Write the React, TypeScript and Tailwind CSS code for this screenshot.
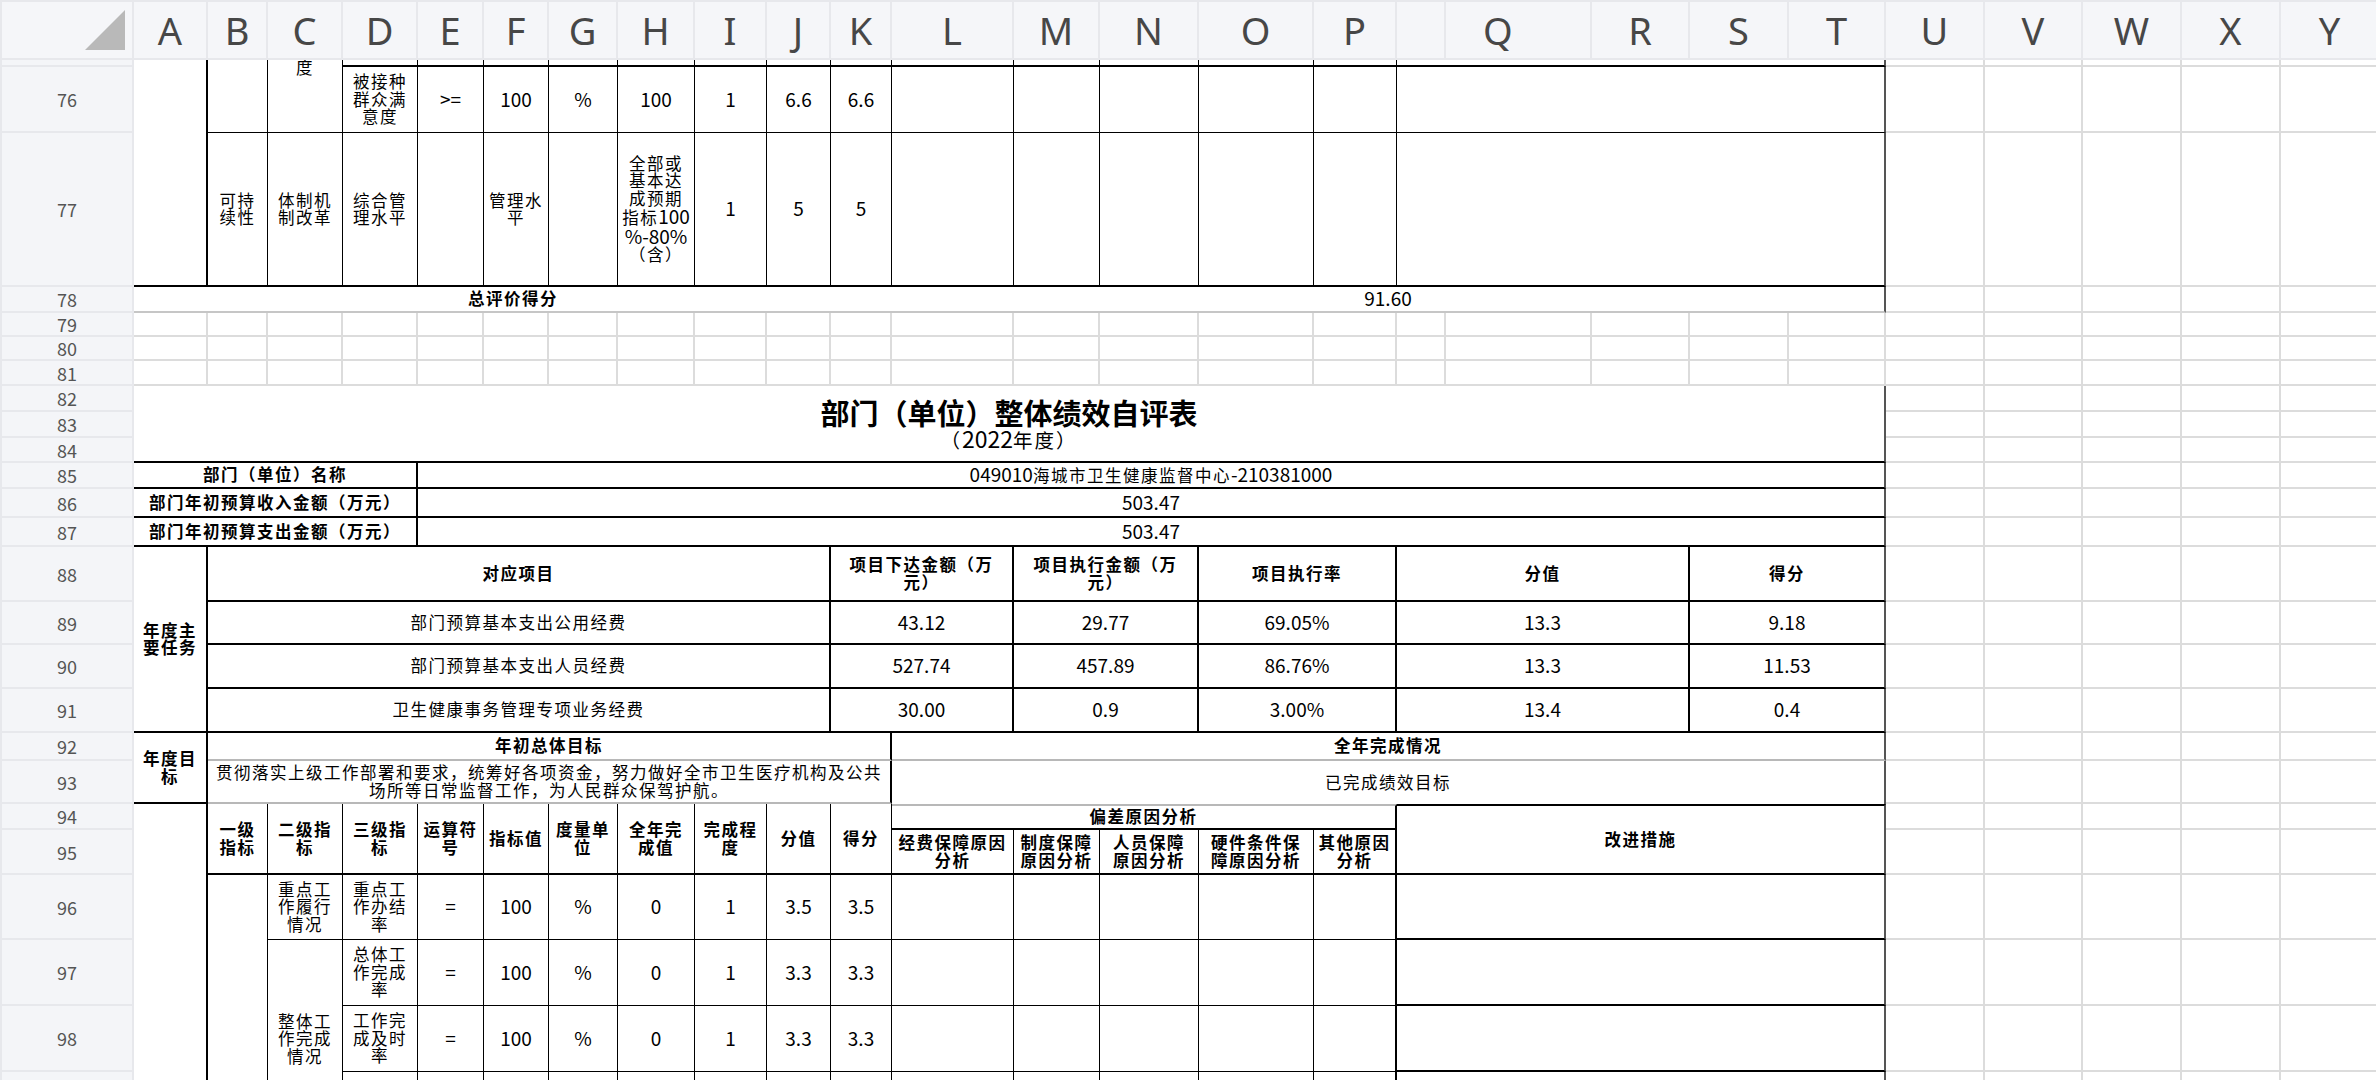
import React from "react";

type Spec = {
  c: number;
  r: number;
  cs?: number;
  rs?: number;
  t?: string;
  b?: boolean;
  x?: string;
  node?: React.ReactNode;
};

const COLS =
  "grid-cols-[134px_74px_60px_75px_75px_66px_65px_69px_77px_72px_64px_61px_122px_86px_99px_115px_83px_49px_146px_98px_99px_97px_99px_98px_99px_99px_99px]";

const CS = [
  "",
  "col-start-1",
  "col-start-2",
  "col-start-3",
  "col-start-4",
  "col-start-5",
  "col-start-6",
  "col-start-7",
  "col-start-8",
  "col-start-9",
  "col-start-10",
  "col-start-11",
  "col-start-12",
  "col-start-13",
  "col-start-14",
  "col-start-15",
  "col-start-16",
  "col-start-17",
  "col-start-18",
  "col-start-19",
  "col-start-20",
  "col-start-21",
  "col-start-22",
];

const RS = [
  "",
  "row-start-1",
  "row-start-2",
  "row-start-3",
  "row-start-4",
  "row-start-5",
  "row-start-6",
  "row-start-7",
  "row-start-8",
  "row-start-9",
  "row-start-10",
  "row-start-11",
  "row-start-12",
  "row-start-13",
  "row-start-14",
  "row-start-15",
  "row-start-16",
  "row-start-17",
  "row-start-18",
  "row-start-19",
  "row-start-20",
  "row-start-21",
  "row-start-22",
  "row-start-23",
  "row-start-24",
  "row-start-25",
];

const CSP: Record<number, string> = {
  2: "col-span-2",
  3: "col-span-3",
  4: "col-span-4",
  5: "col-span-5",
  9: "col-span-9",
  10: "col-span-10",
  11: "col-span-11",
  17: "col-span-17",
  21: "col-span-21",
};

const RSP: Record<number, string> = {
  2: "row-span-2",
  3: "row-span-3",
  4: "row-span-4",
  6: "row-span-6",
};

const R1 = " border-r border-r-black";
const R2 = " border-r-2 border-r-black";
const RT = " border-r-2 border-r-[#555555]";
const B1 = " border-b border-b-black";
const B2 = " border-b-2 border-b-black";
const BG = " border-b-2 border-b-[#b8b8b8]";
const BL = " border-b-2 border-b-[#c6c6c6]";

const specs: Spec[] = [];
const add = (s: Spec) => {
  specs.push(s);
};
const addRow = (r: number, c0: number, texts: string[], x: string | ((i: number) => string), b = false) => {
  texts.forEach((t, i) => add({ c: c0 + i, r, t, b, x: typeof x === "function" ? x(i) : x }));
};

// Split text into CJK runs and Latin runs: Latin glyphs are drawn larger, as in the sheet's font.
function Runs({ t, latin = "text-[19px] tracking-normal" }: { t: string; latin?: string }) {
  const parts = t.split(/([\x20-\x7e]+)/);
  return (
    <div>
      {parts.map((p, i) =>
        p === "" ? null : /^[\x20-\x7e]/.test(p) ? (
          <span key={i} className={latin}>
            {p}
          </span>
        ) : (
          <span key={i}>{p}</span>
        )
      )}
    </div>
  );
}

// rows 75-77 (tail of previous table)
add({ c: 2, r: 1, rs: 3, x: R2 + B2 });
add({ c: 3, r: 1, rs: 2, x: R1 + B1 });
add({
  c: 4,
  r: 1,
  rs: 2,
  x: R1 + B1 + " items-start",
  node: <span className="-mt-[1px]">度</span>,
});
addRow(1, 5, ["", "", "", "", "", "", "", ""], R1 + B2);
addRow(1, 13, ["", "", "", "", ""], R1 + B2);
add({ c: 18, r: 1, cs: 5, x: RT + B2 });

addRow(2, 5, ["被接种\n群众满\n意度", ">=", "100", "%", "100", "1", "6.6", "6.6"], R1 + B1);
addRow(2, 13, ["", "", "", "", ""], R1 + B1);
add({ c: 18, r: 2, cs: 5, x: RT + B1 });

addRow(
  3,
  3,
  [
    "可持\n续性",
    "体制机\n制改革",
    "综合管\n理水平",
    "",
    "管理水\n平",
    "",
    "全部或\n基本达\n成预期\n指标100\n%-80%\n（含）",
    "1",
    "5",
    "5",
  ],
  R1 + B2
);
addRow(3, 13, ["", "", "", "", ""], R1 + B2);
add({ c: 18, r: 3, cs: 5, x: RT + B2 });

// row 78
add({ c: 2, r: 4, cs: 11, t: "总评价得分", b: true, x: BL });
add({ c: 13, r: 4, cs: 10, t: "91.60", x: RT + BL });

// rows 82-84 title
add({
  c: 2,
  r: 8,
  cs: 21,
  rs: 3,
  x: RT + B2,
  node: (
    <div className="flex flex-col items-center tracking-normal">
      <div className="text-[29px] leading-[30px] font-bold">部门（单位）整体绩效自评表</div>
      <div className="text-[19.5px] leading-[22px] tracking-[2px]">
        <Runs t="（2022年度）" latin="text-[23px] tracking-normal" />
      </div>
    </div>
  ),
});

// rows 85-87
add({ c: 2, r: 11, cs: 4, t: "部门（单位）名称", b: true, x: R2 + B2 });
add({ c: 6, r: 11, cs: 17, t: "049010海城市卫生健康监督中心-210381000", x: RT + B2 });
add({ c: 2, r: 12, cs: 4, t: "部门年初预算收入金额（万元）", b: true, x: R2 + B2 });
add({ c: 6, r: 12, cs: 17, t: "503.47", x: RT + B2 });
add({ c: 2, r: 13, cs: 4, t: "部门年初预算支出金额（万元）", b: true, x: R2 + B2 });
add({ c: 6, r: 13, cs: 17, t: "503.47", x: RT + B2 });

// rows 88-91
add({ c: 2, r: 14, rs: 4, t: "年度主\n要任务", b: true, x: R2 + B2 });
const taskRows: [number, string[], boolean][] = [
  [14, ["对应项目", "项目下达金额（万\n元）", "项目执行金额（万\n元）", "项目执行率", "分值", "得分"], true],
  [15, ["部门预算基本支出公用经费", "43.12", "29.77", "69.05%", "13.3", "9.18"], false],
  [16, ["部门预算基本支出人员经费", "527.74", "457.89", "86.76%", "13.3", "11.53"], false],
  [17, ["卫生健康事务管理专项业务经费", "30.00", "0.9", "3.00%", "13.4", "0.4"], false],
];
taskRows.forEach(([r, t, b]) => {
  add({ c: 3, r, cs: 9, t: t[0], b, x: R2 + B2 });
  add({ c: 12, r, cs: 2, t: t[1], b, x: R2 + B2 });
  add({ c: 14, r, cs: 2, t: t[2], b, x: R2 + B2 });
  add({ c: 16, r, cs: 2, t: t[3], b, x: R2 + B2 });
  add({ c: 18, r, cs: 3, t: t[4], b, x: R2 + B2 });
  add({ c: 21, r, cs: 2, t: t[5], b, x: RT + B2 });
});

// rows 92-93
add({ c: 2, r: 18, rs: 2, t: "年度目\n标", b: true, x: R2 + B2 });
add({ c: 3, r: 18, cs: 10, t: "年初总体目标", b: true, x: R2 + BG });
add({ c: 13, r: 18, cs: 10, t: "全年完成情况", b: true, x: RT + BG });
add({
  c: 3,
  r: 19,
  cs: 10,
  t: "贯彻落实上级工作部署和要求，统筹好各项资金，努力做好全市卫生医疗机构及公共\n场所等日常监督工作，为人民群众保驾护航。",
  x: R2 + BG,
});
add({ c: 13, r: 19, cs: 10, t: "已完成绩效目标", x: RT });

// rows 94-95
add({ c: 2, r: 20, rs: 6, x: R2 });
const hdr = ["一级\n指标", "二级指\n标", "三级指\n标", "运算符\n号", "指标值", "度量单\n位", "全年完\n成值", "完成程\n度", "分值", "得分"];
hdr.forEach((t, i) => add({ c: 3 + i, r: 20, rs: 2, t, b: true, x: R1 + B2 }));
add({ c: 13, r: 20, cs: 5, t: "偏差原因分析", b: true, x: " border-t-2 border-t-[#b8b8b8]" + R2 + B2 });
add({ c: 18, r: 20, cs: 5, rs: 2, t: "改进措施", b: true, x: " border-t-2 border-t-black" + RT + B2 });
addRow(
  21,
  13,
  ["经费保障原因\n分析", "制度保障\n原因分析", "人员保障\n原因分析", "硬件条件保\n障原因分析", "其他原因\n分析"],
  (i) => (i === 4 ? R2 : R1) + B2,
  true
);

// rows 96-99
add({ c: 3, r: 22, rs: 4, x: R1 });
add({ c: 4, r: 22, t: "重点工\n作履行\n情况", x: R1 + B1 });
add({ c: 4, r: 23, rs: 3, t: "整体工\n作完成\n情况", x: R1 });
const dataRows: [number, string[]][] = [
  [22, ["重点工\n作办结\n率", "=", "100", "%", "0", "1", "3.5", "3.5"]],
  [23, ["总体工\n作完成\n率", "=", "100", "%", "0", "1", "3.3", "3.3"]],
  [24, ["工作完\n成及时\n率", "=", "100", "%", "0", "1", "3.3", "3.3"]],
  [25, ["", "", "", "", "", "", "", ""]],
];
dataRows.forEach(([r, t]) => {
  addRow(r, 5, t, R1 + B1);
  addRow(r, 13, ["", "", "", "", ""], (i) => (i === 4 ? R2 : R1) + B1);
  add({ c: 18, r, cs: 5, x: RT + B2 });
});

const LETTERS = ["A", "B", "C", "D", "E", "F", "G", "H", "I", "J", "K", "L", "M", "N", "O", "P", "", "Q", "R", "S", "T", "U", "V", "W", "X", "Y"];

function Cell({ s }: { s: Spec }) {
  const cls = [
    CS[s.c],
    RS[s.r],
    s.cs ? CSP[s.cs] : "",
    s.rs ? RSP[s.rs] : "",
    "flex items-center justify-center text-center whitespace-pre overflow-hidden bg-white text-black text-[16.5px] leading-[17.5px] tracking-[1.5px]",
    s.b ? "font-bold" : "",
    s.x || "",
  ].join(" ");
  return <div className={cls}>{s.node ?? (s.t ? <Runs t={s.t} /> : null)}</div>;
}

export default function App() {
  return (
    <div className="w-[2376px] h-[1080px] overflow-hidden bg-white font-['Noto_Sans_CJK_SC',sans-serif]">
      {/* column header */}
      <div className={`grid ${COLS} grid-rows-[60px]`}>
        <div className="flex items-end justify-end pr-[7px] pb-[8px] bg-[#f5f6f9] border-t-2 border-r-2 border-b-2 border-l-2 border-[#e7e8ec]">
          <svg width="40" height="40" viewBox="0 0 40 40">
            <polygon points="40,0 40,40 0,40" fill="#b9b9b9" />
          </svg>
        </div>
        {LETTERS.map((l, i) => (
          <div
            key={i}
            className={`flex items-center ${l === "Q" ? "justify-start pl-[37px]" : "justify-center"} bg-[#f5f6f9] border-t-2 border-r-2 border-b-2 border-[#e7e8ec] text-[38px] leading-none text-[#474747] font-['Noto_Sans',sans-serif]`}
          >
            {l}
          </div>
        ))}
      </div>

      {/* body */}
      <div
        className={`grid ${COLS} grid-rows-[7px_66px_154px_26px_24px_24px_25px_26px_26px_25px_26px_29px_29px_55px_43px_44px_44px_28px_43px_26px_45px_65px_66px_66px_66px] auto-rows-[40px]`}
      >
        {RS.slice(1).map((rs, i) => (
          <div
            key={"rh" + i}
            className={`col-start-1 ${rs} flex items-center justify-center bg-[#f4f5f8] border-l-2 border-r-2 border-b-2 border-[#e7e8ec] text-[18px] leading-none text-[#555555]`}
          >
            {i === 0 ? "" : 75 + i}
          </div>
        ))}
        {specs.map((s, i) => (
          <Cell key={"c" + i} s={s} />
        ))}
        {Array.from({ length: 188 }).map((_, i) => (
          <div key={"g" + i} className="bg-white border-r-2 border-b-2 border-[#dcdcdc]" />
        ))}
      </div>
    </div>
  );
}
